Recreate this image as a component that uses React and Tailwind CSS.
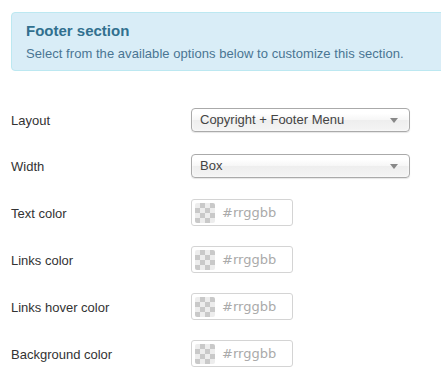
import React from "react";

const Select = ({ value }) => (
  <div className="relative flex h-[24px] w-[219px] items-center rounded-[4px] border border-[#aaaaaa] bg-[linear-gradient(#ffffff_20%,#f6f6f6_50%,#eeeeee_52%,#f4f4f4_100%)] pl-[8px] text-[13px] text-[#444444] shadow-[inset_0_0_3px_#fff,0_1px_1px_rgba(0,0,0,0.1)]">
    <span>{value}</span>
    <svg className="absolute right-[11px] top-[9px]" width="8" height="5" viewBox="0 0 8 5">
      <path d="M0 0 H8 L4 5 Z" fill="#888888" />
    </svg>
  </div>
);

const Checker = () => (
  <div className="h-[20px] w-[20px] overflow-hidden rounded-[2px] bg-[repeating-conic-gradient(#c9c9c9_0_25%,#ededed_0_50%)] bg-[length:10px_10px]" />
);

const ColorInput = () => (
  <div className="flex h-[27px] w-[102px] items-center gap-[7px] rounded-[3px] border border-[#d4d4d4] bg-white pl-[3px]">
    <Checker />
    <span className="font-['DejaVu_Sans',sans-serif] text-[13px] text-[#aaaaaa]">#rrggbb</span>
  </div>
);

const Row = ({ label, h, children }) => (
  <div className={`flex items-center ${h}`}>
    <div className="w-[180px] pt-[2px] text-[13px] text-[#333333]">{label}</div>
    {children}
  </div>
);

export default function App() {
  return (
    <div className="h-[382px] w-[441px] overflow-hidden bg-white font-['Liberation_Sans',Arial,sans-serif]">
      <div className="pl-[11px] pt-[12px]">
        <div className="h-[59px] w-[460px] rounded-l-[4px] border border-[#bce8f1] bg-[#d9edf7] pl-[14px] pt-[9px]">
          <div className="text-[15px] font-bold leading-[17px] text-[#31708f]">Footer section</div>
          <div className="mt-[7px] text-[13px] leading-[15px] tracking-[0.05px] text-[#4a7593]">
            Select from the available options below to customize this section.
          </div>
        </div>
        <div className="pt-[26px]">
          <Row label="Layout" h="h-[46px]">
            <Select value="Copyright + Footer Menu" />
          </Row>
          <Row label="Width" h="h-[46px]">
            <Select value="Box" />
          </Row>
          <Row label="Text color" h="h-[47px]">
            <ColorInput />
          </Row>
          <Row label="Links color" h="h-[47px]">
            <ColorInput />
          </Row>
          <Row label="Links hover color" h="h-[47px]">
            <ColorInput />
          </Row>
          <Row label="Background color" h="h-[47px]">
            <ColorInput />
          </Row>
        </div>
      </div>
    </div>
  );
}
